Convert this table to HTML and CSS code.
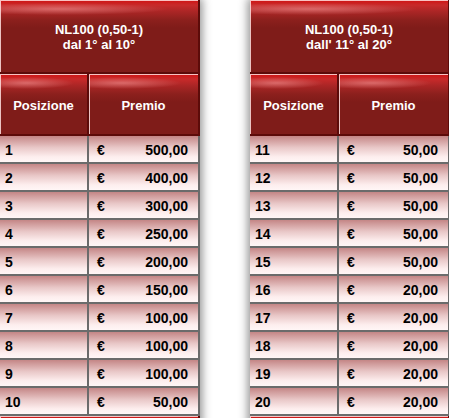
FILE: index.html
```html
<!DOCTYPE html>
<html>
  <head>
    <title>Premi NL100</title>
    <link rel="stylesheet" href="styles.css">
  </head>
  <body>
    <div class="tables">
      <table class="prizes">
        <colgroup>
          <col class="col-pos">
          <col class="col-prize">
        </colgroup>
        <tr>
          <th class="title" colspan="2">NL100 (0,50-1)<br>dal 1° al 10°</th>
        </tr>
        <tr>
          <th class="head">Posizione</th>
          <th class="head">Premio</th>
        </tr>
        <tr><td>1</td><td><span class="cur">€</span><span class="amt">500,00</span></td></tr>
        <tr><td>2</td><td><span class="cur">€</span><span class="amt">400,00</span></td></tr>
        <tr><td>3</td><td><span class="cur">€</span><span class="amt">300,00</span></td></tr>
        <tr><td>4</td><td><span class="cur">€</span><span class="amt">250,00</span></td></tr>
        <tr><td>5</td><td><span class="cur">€</span><span class="amt">200,00</span></td></tr>
        <tr><td>6</td><td><span class="cur">€</span><span class="amt">150,00</span></td></tr>
        <tr><td>7</td><td><span class="cur">€</span><span class="amt">100,00</span></td></tr>
        <tr><td>8</td><td><span class="cur">€</span><span class="amt">100,00</span></td></tr>
        <tr><td>9</td><td><span class="cur">€</span><span class="amt">100,00</span></td></tr>
        <tr><td>10</td><td><span class="cur">€</span><span class="amt">50,00</span></td></tr>
        <tr>
          <th class="foot" colspan="2"></th>
        </tr>
      </table>

      <table class="prizes">
        <colgroup>
          <col class="col-pos">
          <col class="col-prize">
        </colgroup>
        <tr>
          <th class="title" colspan="2">NL100 (0,50-1)<br>dall' 11° al 20°</th>
        </tr>
        <tr>
          <th class="head">Posizione</th>
          <th class="head">Premio</th>
        </tr>
        <tr><td>11</td><td><span class="cur">€</span><span class="amt">50,00</span></td></tr>
        <tr><td>12</td><td><span class="cur">€</span><span class="amt">50,00</span></td></tr>
        <tr><td>13</td><td><span class="cur">€</span><span class="amt">50,00</span></td></tr>
        <tr><td>14</td><td><span class="cur">€</span><span class="amt">50,00</span></td></tr>
        <tr><td>15</td><td><span class="cur">€</span><span class="amt">50,00</span></td></tr>
        <tr><td>16</td><td><span class="cur">€</span><span class="amt">20,00</span></td></tr>
        <tr><td>17</td><td><span class="cur">€</span><span class="amt">20,00</span></td></tr>
        <tr><td>18</td><td><span class="cur">€</span><span class="amt">20,00</span></td></tr>
        <tr><td>19</td><td><span class="cur">€</span><span class="amt">20,00</span></td></tr>
        <tr><td>20</td><td><span class="cur">€</span><span class="amt">20,00</span></td></tr>
        <tr>
          <th class="foot" colspan="2"></th>
        </tr>
      </table>
    </div>
  </body>
</html>
```

FILE: styles.css
```css
html,
body {
  margin: 0;
  overflow: hidden;
  background-color: #ffffff;
}

.tables {
  display: flex;
  gap: 50px;
  width: 500px;
}

.prizes {
  width: 200px;
  table-layout: fixed;
  border-collapse: separate;
  border-spacing: 0;
  font-family: "Liberation Sans", Arial, sans-serif;
  font-weight: bold;
  box-shadow: 0 0 9px 2px rgba(0, 0, 0, 0.45);
  flex-shrink: 0;
}

.col-pos {
  width: 89px;
}

.col-prize {
  width: 111px;
}

th {
  padding: 0;
  color: #ffffff;
  font-size: 13px;
  text-align: center;
  border-right: 2px solid #5c0b09;
  border-bottom: 2px solid #5c0b09;
  box-shadow: inset 1px 1px 0 rgba(255, 225, 225, 0.85);
  background:
    radial-gradient(ellipse 55% 6px at 30% 9px, rgba(255, 170, 170, 0.5), transparent),
    linear-gradient(#d01212, #c82a2a 5px, #ad2626 11px, #8c201d 20px, #7f1c19 28px);
}

.title {
  height: 70px;
  padding-top: 2px;
  line-height: 15px;
}

.head {
  height: 58px;
  padding-top: 2px;
}

.foot {
  height: 30px;
}

td {
  padding: 2px 0 0 5px;
  height: 24px;
  font-size: 14px;
  color: #000000;
  border-right: 2px solid #6b6b6b;
  border-bottom: 2px solid #6b6b6b;
  background: linear-gradient(#c48686, #e9c8c8 45%, #fdeeee 80%, #fff6f6);
}

td + td {
  padding: 2px 10px 0 8px;
}

td + td .cur {
  float: left;
}

td + td .amt {
  float: right;
}
```
